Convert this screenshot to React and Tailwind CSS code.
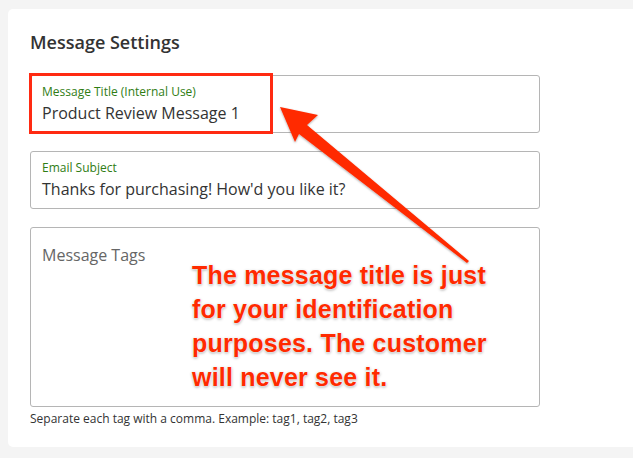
import React from "react";

function Field({ label, value }) {
  return (
    <div className="h-[58px] rounded-[3px] border border-[#b5b5b5] px-[11px] pt-[7px]">
      <div className="text-[12px] leading-[18px] text-[#2f7d14]">{label}</div>
      <div className="mt-[1px] text-[16px] leading-[22px] text-[#333]">{value}</div>
    </div>
  );
}

export default function App() {
  return (
    <div className="relative h-[458px] w-[633px] overflow-hidden bg-[#f4f4f4] pl-[8px] pt-[9px] font-['Open_Sans',sans-serif]">
      <div className="h-[438px] w-[640px] rounded-[5px] bg-white pl-[22px] pt-[21px]">
        <h2 className="text-[18px] font-semibold leading-[24px] text-[#333]">Message Settings</h2>
        <div className="mt-[21px] flex w-[510px] flex-col gap-[18px]">
          <Field label="Message Title (Internal Use)" value="Product Review Message 1" />
          <Field label="Email Subject" value="Thanks for purchasing! How'd you like it?" />
          <div className="h-[180px] rounded-[3px] border border-[#b5b5b5] px-[11px] pt-[16px]">
            <div className="text-[16px] leading-[22px] text-[#666]">Message Tags</div>
          </div>
        </div>
        <p className="mt-[3px] text-[12px] leading-[18px] text-[#333]">
          Separate each tag with a comma. Example: tag1, tag2, tag3
        </p>
      </div>

      <div className="absolute left-[29px] top-[73px] h-[61px] w-[244px] border-[3px] border-[#ff2a12]" />

      <svg className="absolute left-0 top-0" width="633" height="458" viewBox="0 0 633 458">
        <defs>
          <filter id="sh" x="-20%" y="-20%" width="140%" height="140%">
            <feDropShadow dx="0" dy="1" stdDeviation="1" floodColor="#000" floodOpacity="0.35" />
          </filter>
        </defs>
        <polygon
          filter="url(#sh)"
          fill="#ff2a00"
          points="280,107 318,115 307,125 469,261 467,263 299,134 295,142"
        />
      </svg>

      <div
        className="absolute left-[192px] top-[258px] font-[Liberation_Sans,Arial,sans-serif] text-[25px] font-bold leading-[34px] tracking-[0.2px] text-[#ff2a00]"
        style={{ textShadow: "0 0 2px #fff, 0 0 2px #fff, 0 1px 3px rgba(0,0,0,0.45)" }}
      >
        The message title is just
        <br />
        for your identification
        <br />
        purposes. The customer
        <br />
        will never see it.
      </div>
    </div>
  );
}
